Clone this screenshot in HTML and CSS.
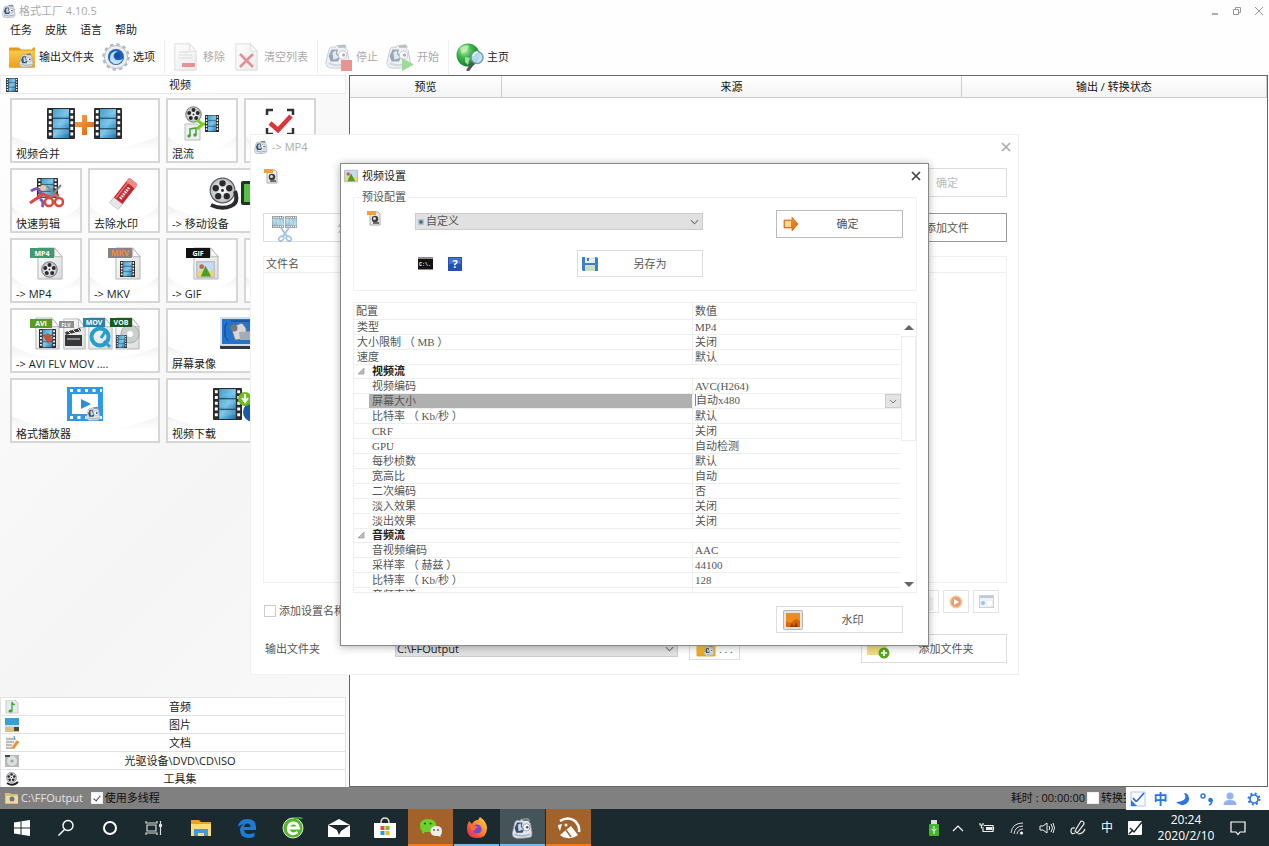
FILE: index.html
```html
<!DOCTYPE html>
<html lang="zh-CN">
<head>
<meta charset="utf-8">
<title>格式工厂 4.10.5</title>
<link rel="stylesheet" href="styles.css">
</head>
<body>
<svg class="defs" aria-hidden="true">
  <defs>
    <linearGradient id="gBlue" x1="0" y1="0" x2="1" y2="1"><stop offset="0" stop-color="#2f8fc0"/><stop offset=".5" stop-color="#6fc0e8"/><stop offset="1" stop-color="#1d79ad"/></linearGradient>
    <linearGradient id="gGold" x1="0" y1="0" x2="0" y2="1"><stop offset="0" stop-color="#fbc94a"/><stop offset="1" stop-color="#e9a21a"/></linearGradient>
    <linearGradient id="gOrange" x1="0" y1="0" x2="1" y2="1"><stop offset="0" stop-color="#f9a552"/><stop offset="1" stop-color="#dd6108"/></linearGradient>
    <linearGradient id="gPage" x1="0" y1="0" x2="1" y2="1"><stop offset="0" stop-color="#fdfdfd"/><stop offset="1" stop-color="#dcdcdc"/></linearGradient>
    <linearGradient id="gFox" x1="1" y1="0" x2="0" y2="1"><stop offset="0" stop-color="#ffe24a"/><stop offset=".5" stop-color="#ff7a2a"/><stop offset="1" stop-color="#e31b5d"/></linearGradient>
    <radialGradient id="gGreen" cx=".35" cy=".3" r=".8"><stop offset="0" stop-color="#b8eeb0"/><stop offset=".4" stop-color="#3cb54a"/><stop offset="1" stop-color="#07702a"/></radialGradient>
    <radialGradient id="gMetal"><stop offset="0" stop-color="#fff"/><stop offset="1" stop-color="#b9bcc0"/></radialGradient>
  </defs>
  <symbol id="film" viewBox="0 0 28 30" preserveAspectRatio="none">
    <rect width="28" height="30" rx="1" fill="#2b2b2d"/>
    <rect x="6" y="1" width="16" height="28" fill="url(#gBlue)"/>
    <path d="M6 10h16M6 20h16" stroke="#1d3a4a" stroke-width="1"/>
    <path d="M6 1h16v5L6 9zM6 11h16v4L6 18zM6 21h16v4L6 27z" fill="#fff" opacity=".12"/>
    <path d="M3.200 2v27M24.800 2v27" stroke="#fff" stroke-width="2.800" stroke-dasharray="3 2.400"/>
  </symbol>
  <symbol id="reel" viewBox="0 0 24 24">
    <circle cx="12" cy="12" r="11" fill="url(#gMetal)" stroke="#56585b"/>
    <g fill="#29292b"><circle cx="12" cy="5.600" r="2.800"/><circle cx="18" cy="10" r="2.800"/><circle cx="15.800" cy="17" r="2.800"/><circle cx="8.200" cy="17" r="2.800"/><circle cx="6" cy="10" r="2.800"/><circle cx="12" cy="12" r="1.300"/></g>
  </symbol>
  <symbol id="ff" viewBox="0 0 28 28">
    <path d="M4 8q0-3 4-4l3 1 1-2 9-1 2 2-1 2 2 2 2 12q1 5-3 6l-9 1H6q-5-1-5-6z" fill="#e2e6ec" stroke="#8f98a6"/>
    <path d="M7 7l7 0-1 4 3 5-2 4-8 0-2-6z" fill="#35516f"/>
    <path d="M8 10l4-2 0 4 3 4-6 2z" fill="#c6d6ea"/>
    <path d="M14 3l8-1v3h-8z" fill="#747d8a"/>
    <circle cx="19" cy="13" r="4.500" fill="#fff" stroke="#8790a0"/><circle cx="20" cy="13" r="1.700" fill="#44566c"/>
    <path d="M4 22q9 4 20 0" stroke="#a7afbb" stroke-width="2" fill="none"/>
  </symbol>
  <symbol id="folder" viewBox="0 0 28 24">
    <path d="M1 3q0-1 1-1h9l2 2h11l1-2h2v20H1z" fill="#e39b1a"/>
    <path d="M1 5h26v16q0 1-1 1H2q-1 0-1-1z" fill="url(#gGold)"/>
    <use href="#ff" x="11" y="7" width="15" height="15"/>
  </symbol>
  <symbol id="page" viewBox="0 0 28 34" preserveAspectRatio="none">
    <path d="M1 1h18l8 9v23H1z" fill="url(#gPage)" stroke="#b4b4b4"/>
    <path d="M19 1v9h8z" fill="#f8f8f8" stroke="#b4b4b4"/>
  </symbol>
  <symbol id="photo" viewBox="0 0 20 18">
    <rect width="20" height="18" rx="1" fill="#b9bfc9"/><rect x="1.500" y="1.500" width="17" height="15" fill="#c5dcf5"/>
    <path d="M1.500 11l5-2 6 2 6-1v6.500h-17z" fill="#efd56c"/><path d="M5 16.500L10 5l6 11.500z" fill="#4d9c2c"/><circle cx="6" cy="6" r="2.500" fill="#d0642a"/>
  </symbol>
  <symbol id="scissors" viewBox="0 0 28 22">
    <path d="M8 1l9 13M20 1l-9 13" stroke="currentColor" stroke-width="2.500" fill="none"/>
    <ellipse cx="8.500" cy="17" rx="4" ry="3" fill="none" stroke="currentColor" stroke-width="2.300" transform="rotate(-40 8.500 17)"/>
    <ellipse cx="19.500" cy="17" rx="4" ry="3" fill="none" stroke="currentColor" stroke-width="2.300" transform="rotate(40 19.500 17)"/>
  </symbol>
  <symbol id="miniprofile" viewBox="0 0 14 16">
    <path d="M3 2h8l2 2v11H3z" fill="#eee" stroke="#aaa"/>
    <path d="M0 1h9v4H0z" fill="#eea03c"/>
    <circle cx="8" cy="9" r="3.300" fill="#3e3e40"/><circle cx="7.500" cy="8.500" r="1.500" fill="#ddd"/><path d="M6 13h6" stroke="#444" stroke-width="1.500"/>
  </symbol>
  <symbol id="chev" viewBox="0 0 10 6"><path d="M1 1l4 4 4-4" fill="none" stroke="#777" stroke-width="1.200"/></symbol>
  <symbol id="close" viewBox="0 0 10 10"><path d="M1 1l8 8M9 1L1 9" fill="none" stroke="currentColor" stroke-width="1.700"/></symbol>
</svg>

<div class="desktop">
  <header class="titlebar">
    <svg class="ico14"><use href="#ff"/></svg>
    <h1>格式工厂 4.10.5</h1>
    <div class="wincontrols">
      <button aria-label="最小化"><svg viewBox="0 0 10 10"><path d="M2 8h6" stroke="#777" stroke-width="1.200"/></svg></button>
      <button aria-label="还原"><svg viewBox="0 0 10 10"><path d="M1.500 3.500h5v5h-5zM3.500 3V1.500h5v5H7" fill="none" stroke="#999"/></svg></button>
      <button aria-label="关闭"><svg viewBox="0 0 10 10"><path d="M1 1l8 8M9 1L1 9" stroke="#999"/></svg></button>
    </div>
  </header>
  <nav class="menubar"><a href="#">任务</a><a href="#">皮肤</a><a href="#">语言</a><a href="#">帮助</a></nav>
  <div class="toolbar">
    <button><svg viewBox="0 0 28 28"><use href="#folder" y="2" width="28" height="25"/></svg>输出文件夹</button>
    <button><svg viewBox="0 0 28 28"><circle cx="14" cy="14" r="12" fill="none" stroke="#b3b8c0" stroke-width="3.500" stroke-dasharray="3.200 3.080"/><circle cx="14" cy="14" r="11.500" fill="#eceef2" stroke="#b9bfc8"/><circle cx="14" cy="14" r="8" fill="#1d63b8"/><path d="M8 17q-1-9 8-9-6 3-4 7t9 1q-3 6-8 5-4-1-5-4z" fill="#bfe0fb"/><circle cx="15.500" cy="12.500" r="3" fill="#1650a0"/></svg>选项</button>
    <span class="sep"></span>
    <button disabled><svg viewBox="0 0 28 28"><use href="#page" x="2" width="23" height="28"/><path d="M7 9h10M7 12h13M7 15h13" stroke="#bbb"/><rect x="10" y="20" width="13" height="4" fill="#cf2b35"/></svg>移除</button>
    <button disabled><svg viewBox="0 0 28 28"><use href="#page" x="2" width="23" height="28"/><path d="M7 11l13 13M20 11L7 24" stroke="#c32531" stroke-width="2.600"/></svg>清空列表</button>
    <span class="sep"></span>
    <button disabled><svg viewBox="0 0 28 28"><use href="#ff" width="26" height="26"/><rect x="16" y="17" width="11" height="11" fill="#d52b2b"/></svg>停止</button>
    <button disabled><svg viewBox="0 0 28 28"><use href="#ff" width="26" height="26"/><path d="M16 15l12 6.500L16 28z" fill="#3db82e"/></svg>开始</button>
    <span class="sep"></span>
    <button><svg viewBox="0 0 28 28"><circle cx="12" cy="12" r="11.500" fill="url(#gGreen)"/><path d="M4 5q5-4 9-2l-2 5-5 3zM9 14l5 1-2 7-3-3z" fill="#c9f2b8" opacity=".75"/><path d="M18 19l-6 8" stroke="#555" stroke-width="3" stroke-linecap="round"/><circle cx="21" cy="14.500" r="6" fill="#bfe0f4" opacity=".92" stroke="#6b98b8" stroke-width="1.500"/><path d="M17 13q1-4 5-4" stroke="#fff" stroke-width="1.500" fill="none"/></svg>主页</button>
  </div>

  <main class="workspace">
    <aside class="sidebar">
      <button class="cat"><svg viewBox="0 0 14 14"><use href="#film" x="1" width="12" height="14"/></svg><span>视频</span></button>
      <div class="tiles">
        <button class="tile w2"><svg width="76" height="36" viewBox="0 0 76 36"><use href="#film" y="2" width="28" height="31"/><use href="#film" x="47" y="2" width="28" height="31"/><path d="M35 9h5v7h7v5h-7v8h-5v-8h-7v-5h7z" fill="url(#gOrange)"/></svg><span>视频合并</span></button>
        <button class="tile"><svg width="36" height="36" viewBox="0 0 36 36"><use href="#reel" x="1" width="17" height="17"/><path d="M1 18h12l3 3v13H1z" fill="#eee" stroke="#bbb"/><path d="M6 30v-7l6-1v7" stroke="#3ca63c" stroke-width="1.500" fill="none"/><circle cx="5" cy="30" r="1.700" fill="#3ca63c"/><circle cx="11" cy="29" r="1.700" fill="#3ca63c"/><path d="M13 14l5 4h5M13 23l6-5" stroke="#76cc22" stroke-width="3" fill="none"/><use href="#film" x="21" y="9" width="14" height="17"/></svg><span>混流</span></button>
        <button class="tile"><svg width="36" height="36" viewBox="0 0 36 36"><path d="M5 9V4h6M25 4h6v5M31 22v6h-6M11 28H5v-6" fill="none" stroke="#333" stroke-width="2.500"/><path d="M8 17l8 7L29 10" fill="none" stroke="#dd343b" stroke-width="4.500"/></svg><span>检查</span></button>

        <button class="tile"><svg width="36" height="36" viewBox="0 0 36 36"><use href="#film" x="9" y="2" width="21" height="20"/><path d="M3 15q7-5 9 1t-3 6M12 23q5 3 2 8" fill="none" stroke="#8055b8" stroke-width="3"/><path d="M2 27l13-9 6 3 10-2" fill="none" stroke="#e04848" stroke-width="3"/><circle cx="15" cy="12" r="3" fill="#f0c9a0"/><path d="M22 22L33 9M30 22L19 10" stroke="#888" stroke-width="2"/><circle cx="21" cy="26" r="4" fill="none" stroke="#d94a38" stroke-width="2.500"/><circle cx="31" cy="26" r="4" fill="none" stroke="#d94a38" stroke-width="2.500"/></svg><span>快速剪辑</span></button>
        <button class="tile"><svg width="36" height="36" viewBox="0 0 36 36"><g transform="rotate(38 18 18)"><rect x="12" y="2" width="11" height="31" rx="1.500" fill="#c6262d"/><path d="M12 7V3q0-1 1-1h9q1 0 1 1v4z" fill="#f08c86"/><rect x="12" y="27" width="11" height="7" fill="#e8e8e8" stroke="#bbb" stroke-width=".5"/><path d="M14 7v19" stroke="#e97878" stroke-width="1.500"/><path d="M18 10v14" stroke="#fff" stroke-width="3" stroke-dasharray="1.500 1"/></g></svg><span>去除水印</span></button>
        <button class="tile w2"><svg width="68" height="36" viewBox="0 0 68 36"><use href="#reel" x="2" width="27" height="29"/><path d="M28 15q4 12-4 15-9 4-20-1" fill="none" stroke="#2b2b2d" stroke-width="4"/><rect x="34" y="5" width="32" height="24" rx="2" fill="#26332a"/><rect x="37" y="8" width="26" height="18" fill="#57c04a"/></svg><span>-&gt; 移动设备</span></button>

        <button class="tile"><svg width="36" height="36" viewBox="0 0 36 36"><use href="#page" x="9" y="1" width="26" height="33"/><rect x="2" y="2" width="24" height="10" fill="#3f9a70"/><text x="14" y="10" class="tag">MP4</text><use href="#reel" x="13" y="15" width="17" height="17"/></svg><span>-&gt; MP4</span></button>
        <button class="tile"><svg width="36" height="36" viewBox="0 0 36 36"><use href="#page" x="9" y="1" width="26" height="33"/><rect x="2" y="2" width="24" height="10" fill="#858585"/><text x="14" y="10" class="tag orange">MKV</text><use href="#film" x="14" y="15" width="15" height="16"/></svg><span>-&gt; MKV</span></button>
        <button class="tile"><svg width="36" height="36" viewBox="0 0 36 36"><use href="#page" x="9" y="1" width="26" height="33"/><rect x="2" y="2" width="24" height="10" fill="#111"/><text x="14" y="10" class="tag">GIF</text><use href="#photo" x="12" y="15" width="19" height="17"/></svg><span>-&gt; GIF</span></button>
        <button class="tile"><svg width="36" height="36" viewBox="0 0 36 36"><use href="#page" x="9" y="1" width="26" height="33"/></svg><span>-&gt; WebM</span></button>

        <button class="tile w2"><svg width="112" height="36" viewBox="0 0 112 36"><use href="#page" x="6" y="1" width="25" height="33"/><rect x="1" y="3" width="22" height="9" fill="#5a9b22"/><text x="12" y="10" class="tag">AVI</text><use href="#film" x="10" y="13" width="17" height="19"/><path d="M14 20l5-3 5 6-5 5z" fill="#c1553a"/>
          <use href="#page" x="34" y="2" width="23" height="32"/><rect x="30" y="5" width="15" height="7" fill="#8f8f8f"/><text x="37" y="11" class="tag small">FLV</text><path d="M36 16l15-4 1 3-15 4zM36 19h17v11H36z" fill="#37383a"/><path d="M39 15l3 3M44 14l3 3M49 13l2 2M38 23h13" stroke="#ddd"/>
          <use href="#page" x="59" y="1" width="25" height="33"/><rect x="54" y="2" width="22" height="9" fill="#2f80a7"/><text x="65" y="9" class="tag">MOV</text><circle cx="71" cy="21" r="8.500" fill="none" stroke="#259ed0" stroke-width="4"/><path d="M72 22l4-6M75 25l6 6" stroke="#259ed0" stroke-width="3"/>
          <use href="#page" x="86" y="1" width="25" height="33"/><circle cx="101" cy="18" r="9" fill="#ccd0cc" stroke="#aaa"/><circle cx="101" cy="18" r="3" fill="#fff"/><rect x="81" y="2" width="22" height="9" fill="#155c20"/><text x="92" y="9" class="tag">VOB</text><use href="#film" x="87" y="19" width="11" height="13"/></svg><span>-&gt; AVI FLV MOV ....</span></button>
        <button class="tile w2"><svg width="44" height="36" viewBox="0 0 44 36"><rect x="1" y="2" width="42" height="31" rx="1" fill="#34383e"/><rect x="1" y="1" width="42" height="29" rx="1" fill="#d4dce6"/><rect x="3" y="3" width="38" height="25" fill="#2273ce"/><path d="M8 7l-2 3v10l3 5M12 5h20l6 5-2 14" fill="none" stroke="#123f86"/><path d="M12 11l11-4 4 5 1 11-12 1z" fill="#d8d8dc" stroke="#777"/><circle cx="15" cy="12" r="3.500" fill="#777"/><path d="M20 16l14-1v9H21z" fill="#a4acb8"/></svg><span>屏幕录像</span></button>

        <button class="tile w2"><svg width="36" height="36" viewBox="0 0 36 36"><rect width="36" height="34" y="1" fill="#2b9ae8"/><rect x="5" y="8" width="26" height="20" fill="#fff"/><path d="M3 4.500h32M3 31.500h32" stroke="#fff" stroke-width="3" stroke-dasharray="3 4.500"/><path d="M14 13l10 5-10 5z" fill="#2b8fd8"/><use href="#ff" x="18" y="20" width="17" height="15"/></svg><span>格式播放器</span></button>
        <button class="tile w2"><svg width="56" height="36" viewBox="0 0 56 36"><use href="#film" y="2" width="29" height="32"/><circle cx="40" cy="26" r="10" fill="#1c59a4"/><circle cx="32" cy="13" r="7" fill="#6cbc1e"/><path d="M32 8v6m-3-2l3 4 3-4" stroke="#fff" stroke-width="2" fill="none"/></svg><span>视频下载</span></button>
      </div>
      <div class="cats">
        <button class="cat"><svg viewBox="0 0 14 14"><path d="M1 0h9l3 3v10H1z" fill="#e7ebe7" stroke="#ccc"/><path d="M7 11V2q0 2 3 3" fill="none" stroke="#36a436" stroke-width="1.300"/><ellipse cx="5.500" cy="11" rx="2" ry="1.500" fill="#36a436"/></svg><span>音频</span></button>
        <button class="cat"><svg viewBox="0 0 14 14"><rect width="14" height="14" fill="#3a9fd6"/><path d="M0 7h14v3H0z" fill="#bfe2ec"/><path d="M0 9h14v5H0z" fill="#dcc083"/><path d="M9 9h5v4H9z" fill="#4d4a3c"/></svg><span>图片</span></button>
        <button class="cat"><svg viewBox="0 0 14 14"><path d="M1 1h10v12H1z" fill="#eee"/><path d="M1 3h8M1 6h8M1 9h6M1 12h8" stroke="#888"/><path d="M13 5l-5 7" stroke="#ee9030" stroke-width="3"/><path d="M9 0l1 4" stroke="#3992c4"/></svg><span>文档</span></button>
        <button class="cat"><svg viewBox="0 0 14 14"><path d="M0 1h14v12H0z" fill="#b9b9b9"/><circle cx="7" cy="7" r="5" fill="#dedede"/><circle cx="7" cy="7" r="1.500" fill="#79b5a4"/><path d="M0 1h5v2H0z" fill="#444"/></svg><span>光驱设备\DVD\CD\ISO</span></button>
        <button class="cat"><svg viewBox="0 0 14 14"><use href="#reel" x="1" width="11" height="11"/><path d="M2 11q6 4 11-1" stroke="#222" stroke-width="2" fill="none"/></svg><span>工具集</span></button>
      </div>
    </aside>
    <section class="tasks">
      <table><thead><tr><th class="c1">预览</th><th class="c2">来源</th><th class="c3">输出 / 转换状态</th></tr></thead></table>
    </section>
  </main>

  <footer class="status">
    <svg class="ico14" viewBox="0 0 14 14"><path d="M0 2h5l1 1h7v10H0z" fill="#d8bd74"/><path d="M1 5h12v7H1z" fill="#eddba0"/><circle cx="7" cy="8" r="2.500" fill="#6d7787"/></svg>
    <a href="#">C:\FFOutput</a>
    <label><input type="checkbox" checked>使用多线程</label>
    <div class="right"><span>耗时 : 00:00:00</span><label><input type="checkbox">转换完成后</label></div>
  </footer>

  <footer class="taskbar">
    <div class="sys">
      <button aria-label="开始"><svg width="16" height="16" viewBox="0 0 16 16"><path d="M0 2.500L6.500 1.500V7.500H0zM7.500 1.300L16 0v7.500H7.500zM0 8.500h6.500v6L0 13.500zM7.500 8.500H16V16l-8.500-1.300z" fill="#fff"/></svg></button>
      <button aria-label="搜索"><svg width="18" height="18" viewBox="0 0 18 18"><circle cx="11" cy="6.500" r="5" fill="none" stroke="#fff" stroke-width="1.400"/><path d="M7.500 10.500L1.500 16.500" stroke="#fff" stroke-width="1.500"/></svg></button>
      <button aria-label="Cortana"><svg width="16" height="16" viewBox="0 0 16 16"><circle cx="8" cy="8" r="6" fill="none" stroke="#fff" stroke-width="2"/></svg></button>
      <button aria-label="任务视图"><svg width="18" height="16" viewBox="0 0 18 16"><path d="M2 5h9v6H2zM1 1v2h11V1M1 15v-2h11v2M15.500 1v14" fill="none" stroke="#ddd" stroke-width="1.200"/><path d="M14 4h3v3h-3z" fill="#ddd"/></svg></button>
    </div>
    <div class="apps">
      <button aria-label="文件资源管理器"><svg width="22" height="20" viewBox="0 0 22 20"><path d="M1 2h8l2 2h10v14H1z" fill="#e9a320"/><path d="M1 6h20v12H1z" fill="#ffdc76"/><path d="M4 18v-7h14v7h-4v-3H8v3z" fill="#3f9bdc"/></svg></button>
      <button aria-label="Edge"><svg width="20" height="20" viewBox="0 0 20 20"><path d="M1 9Q2 1 10.500 1 19 1 19 9v3H7q.5 4 5 4 3 0 5.500-1.500v4Q15 20 11 20 3 19.500 3 12q0-4 4-6-4 .5-6 3zM7 9h6.500q0-3.500-3-3.500T7 9z" fill="#1b7cd8"/></svg></button>
      <button aria-label="浏览器"><svg width="22" height="22" viewBox="0 0 22 22"><circle cx="11" cy="11" r="10" fill="#55b72c" stroke="#dfeccf"/><path d="M15.500 15q-4 3-7 1t-2-6 5-4 5 5H7" fill="none" stroke="#fff" stroke-width="2.800"/><path d="M12 1q7-1 8 1" stroke="#3da020" stroke-width="2" fill="none"/></svg></button>
      <button aria-label="邮件"><svg width="24" height="20" viewBox="0 0 24 20"><path d="M1 7l11-6 11 6v12H1z" fill="#fff"/><path d="M1 7h22l-9 6-2 4-2-5z" fill="#1b2a2f"/></svg></button>
      <button aria-label="应用商店"><svg width="22" height="22" viewBox="0 0 22 22"><path d="M7 6q0-5 4-5t4 5" fill="none" stroke="#ddd" stroke-width="1.500"/><path d="M0 6h22v14q0 1-1 1H1q-1 0-1-1z" fill="#fff"/><path d="M6.500 9h4v4h-4z" fill="#ea4f28"/><path d="M11.500 9h4v4h-4z" fill="#7fb92c"/><path d="M6.500 14h4v4h-4z" fill="#1ba1e2"/><path d="M11.500 14h4v4h-4z" fill="#f8b41c"/></svg></button>
      <button class="alert" aria-label="微信"><svg width="24" height="20" viewBox="0 0 24 20"><path d="M9 1q8 0 8 6.500T9 14l-3 0-3 2v-3Q1 11 1 7.500 1 1 9 1z" fill="#6cd02c"/><circle cx="6" cy="5.500" r="1" fill="#274a12"/><circle cx="11.500" cy="5.500" r="1" fill="#274a12"/><path d="M17 8q6 0 6 5 0 3-1.500 4v2l-2-1h-3q-5-.5-5-5t5.500-5z" fill="#eee"/><circle cx="15" cy="12" r=".9" fill="#555"/><circle cx="19" cy="12" r=".9" fill="#555"/></svg></button>
      <button class="run" aria-label="Firefox"><svg width="22" height="22" viewBox="0 0 22 22"><path d="M3 4l3 3q2-4 6-4l2-3q7 5 7 11 0 10-10 10T1 12q0-5 2-8z" fill="url(#gFox)"/><circle cx="11" cy="12" r="4.500" fill="#7448d4"/><path d="M4 9q5-2 8 2-3 0-4 3-3-1-4-5z" fill="#ff6a32"/></svg></button>
      <button class="run active" aria-label="格式工厂"><svg width="23" height="22"><use href="#ff"/></svg></button>
      <button class="alert" aria-label="图库"><svg width="24" height="22" viewBox="0 0 24 22"><path d="M3 4q8-5 15 0 5 5 4 11" fill="none" stroke="#fff" stroke-width="2.500"/><path d="M1 8l4-1-2 7q-2-3-2-6zM3 18L14 9l7 9q-5 4-10 3-5 0-8-3z" fill="#fff"/><path d="M9 13l5 7" stroke="#a4622b" stroke-width="1.500"/><circle cx="9" cy="8" r="1.500" fill="#fff"/></svg></button>
    </div>
    <div class="tray">
      <svg class="t1" width="12" height="16" viewBox="0 0 12 16"><path d="M3 0h6v4H3z" fill="#ddd"/><rect x="1" y="4" width="10" height="12" rx="1" fill="#43b52a"/><path d="M6 6v8M3.500 9l2.500 2 2.500-2" stroke="#fff" fill="none"/></svg>
      <svg width="12" height="8" viewBox="0 0 12 8"><path d="M1 7l5-5 5 5" fill="none" stroke="#fff" stroke-width="1.200"/></svg>
      <svg width="16" height="12" viewBox="0 0 16 12"><path d="M5 3.500h9v6H4V7M14.500 5v3M1 1v2h3V1M2.500 3v3H5" fill="none" stroke="#eee" stroke-width="1.200"/><path d="M7 5h6v3H7z" fill="#eee"/></svg>
      <svg width="14" height="14" viewBox="0 0 14 14"><path d="M1 12Q2 2 13 2M4 13Q5 5 13 5M7 13q1-5 6-5" fill="none" stroke="#ddd"/><circle cx="11.500" cy="12" r="1.500" fill="#fff"/></svg>
      <svg width="16" height="14" viewBox="0 0 16 14"><path d="M1 5h3l4-3v10L4 9H1zM10 5q1.500 2 0 4M12 3q3 4 0 8M14 2q3 5 0 10" fill="none" stroke="#eee"/></svg>
      <svg width="16" height="16" viewBox="0 0 16 16"><path d="M5 11L11 1q3 0 3 3l-7 9zM5 8q-4-1-4 3t4 2M8 14q5 0 7-5" fill="none" stroke="#eee" stroke-width="1.200"/></svg>
      <span class="lang">中</span>
      <svg width="14" height="14" viewBox="0 0 14 14"><rect width="14" height="14" rx="1" fill="#fff"/><path d="M2 7l4 4 8-10M1 13l4-4" stroke="#1b2a2f" stroke-width="1.500" fill="none"/></svg>
      <time><span>20:24</span><span>2020/2/10</span></time>
      <button aria-label="通知"><svg width="16" height="16" viewBox="0 0 16 16"><path d="M1 2h14v10h-5l-2 2.500L6 12H1z" fill="none" stroke="#fff" stroke-width="1.200"/></svg></button>
    </div>
  </footer>

  <div class="ime">
    <svg viewBox="0 0 16 16"><path d="M1 1h14v14H1z" fill="#fff" stroke="#aac8f4"/><path d="M3 7q3 4 4 3L14 2" fill="none" stroke="#246be0" stroke-width="1.700"/><path d="M1 9l6 6H1z" fill="#2d75e6"/></svg>
    <span>中</span>
    <svg viewBox="0 0 16 16"><path d="M9 2q5 8-8 9 5 5 10 2t2-9q-1-2-4-2z" fill="#2d75e6"/></svg>
    <svg viewBox="0 0 16 16"><circle cx="4" cy="5" r="2" fill="none" stroke="#2d75e6" stroke-width="1.500"/><circle cx="11.500" cy="9" r="2.300" fill="#2d75e6"/><path d="M13 9q0 4-3 5" fill="none" stroke="#2d75e6" stroke-width="1.500"/></svg>
    <svg viewBox="0 0 16 16"><circle cx="8" cy="5" r="3.500" fill="#8fb3f0"/><path d="M1.500 14q0-5 6.500-5t6.500 5z" fill="#8fb3f0"/></svg>
    <svg viewBox="0 0 16 16"><circle cx="8" cy="8" r="4" fill="none" stroke="#2d75e6" stroke-width="1.700"/><circle cx="8" cy="8" r="5.500" fill="none" stroke="#2d75e6" stroke-width="2" stroke-dasharray="2 2.320"/></svg>
  </div>

  <section class="window mp4">
    <header><svg class="ico14"><use href="#ff"/></svg><h2>-&gt; MP4</h2><button class="x" aria-label="关闭"><svg><use href="#close"/></svg></button></header>
    <div class="r1"><svg width="14" height="16"><use href="#miniprofile"/></svg><button class="btn" disabled>确定</button></div>
    <div class="r2"><button class="btn cut" disabled><svg width="30" height="28" viewBox="0 0 30 28" color="#3f86cf"><use href="#film" transform="rotate(90 8 8)" x="2" y="2" width="12" height="12"/><use href="#film" transform="rotate(90 21 8)" x="15" y="2" width="12" height="12"/><use href="#scissors" x="4" y="13" width="22" height="15"/></svg><span>分割</span></button><button class="btn dark">添加文件</button></div>
    <div class="list"><table><thead><tr><th>文件名</th></tr></thead></table></div>
    <div class="r3"><label><input type="checkbox">添加设置名称</label>
      <div><button class="btn sq" aria-label="新建"><svg width="14" height="16" opacity=".4"><use href="#page"/></svg></button><button class="btn sq" aria-label="播放"><svg width="14" height="14" viewBox="0 0 14 14" opacity=".7"><circle cx="7" cy="7" r="6.500" fill="#f0b088"/><circle cx="7" cy="7" r="5" fill="#e2762b"/><path d="M5 4l5 3-5 3z" fill="#fff"/></svg></button><button class="btn sq" aria-label="信息"><svg width="15" height="13" viewBox="0 0 15 13" opacity=".6"><rect x=".5" y=".5" width="14" height="12" fill="#e5eaf0" stroke="#aab4c0"/><path d="M1 2h13" stroke="#8fa6c0" stroke-width="2"/><circle cx="4" cy="8" r="2" fill="#4aa3d0"/><path d="M8 6h5v4H8z" fill="#fff"/></svg></button></div></div>
    <div class="r4"><label for="outdir">输出文件夹</label>
      <div class="combo"><select id="outdir"><option>C:\FFOutput</option></select><svg><use href="#chev"/></svg></div>
      <button class="btn browse"><svg width="20" height="18"><use href="#folder"/></svg>. . .</button>
      <button class="btn add"><svg width="24" height="20" viewBox="0 0 24 20"><path d="M1 2h8l2 2h9v12H1z" fill="#d9b247"/><path d="M1 6h20v10H1z" fill="#f2da81"/><circle cx="18" cy="14" r="5.500" fill="#55a822"/><path d="M15 14h6M18 11v6" stroke="#fff" stroke-width="1.700"/></svg><span>添加文件夹</span></button></div>
  </section>

  <section class="window settings" role="dialog" aria-label="视频设置">
    <header><svg class="ico14"><use href="#photo"/></svg><h2>视频设置</h2><button class="x" aria-label="关闭"><svg><use href="#close"/></svg></button></header>
    <fieldset>
      <legend>预设配置</legend>
      <div class="preset">
        <svg width="14" height="16"><use href="#miniprofile"/></svg>
        <div class="combo"><svg class="dot" viewBox="0 0 8 8"><rect width="8" height="8" fill="#b3c3d0"/><rect x="2" y="2" width="4" height="4" fill="#39658b"/></svg><select aria-label="预设"><option>自定义</option></select><svg><use href="#chev"/></svg></div>
        <button class="btn ok"><svg width="16" height="14" viewBox="0 0 16 14"><path d="M1 3h8V0l6 7-6 7v-3H1z" fill="url(#gOrange)" stroke="#cf6410" stroke-width=".7"/><path d="M2 4h6v6H2z" fill="#ffd795"/></svg><span>确定</span></button>
        <div class="tools">
          <button aria-label="命令行"><svg width="15" height="13" viewBox="0 0 15 13"><rect width="15" height="13" fill="#8d8d8d"/><rect y="2" width="15" height="10" fill="#111"/><text x="7" y="9" class="cmd">C:\.</text></svg></button>
          <button aria-label="帮助"><svg width="14" height="14" viewBox="0 0 14 14"><rect width="14" height="14" fill="#2451b8"/><rect x="1" y="1" width="12" height="6" fill="#4270cc"/><text x="7" y="11" class="q">?</text></svg></button>
          <button class="btn saveas"><svg width="16" height="16" viewBox="0 0 16 16"><path d="M0 1h14l2 1v13H1l-1-1z" fill="#3f7dc6"/><rect x="3" y="1" width="10" height="6" fill="#e3eef9"/><rect x="3" y="9" width="10" height="6" fill="#c8e0bd"/><path d="M5 2h2v3H5z" fill="#4677ab"/></svg><span>另存为</span></button>
        </div>
      </div>
    </fieldset>
    <div class="grid">
      <table>
        <thead><tr><th class="k">配置</th><th>数值</th><th class="sb"></th></tr></thead>
        <tbody>
          <tr><td>类型</td><td>MP4</td></tr>
          <tr><td>大小限制 （ MB ）</td><td>关闭</td></tr>
          <tr><td>速度</td><td>默认</td></tr>
          <tr class="group"><td colspan="2"><svg viewBox="0 0 8 8"><path d="M7 1v6H1z" fill="#bbb" stroke="#999" stroke-width=".7"/></svg>视频流</td></tr>
          <tr class="sub"><td>视频编码</td><td>AVC(H264)</td></tr>
          <tr class="sub sel"><td><span>屏幕大小</span></td><td><div class="edit"><input value="自动x480" aria-label="屏幕大小"><button aria-label="展开"><svg><use href="#chev"/></svg></button></div></td></tr>
          <tr class="sub"><td>比特率 （ Kb/秒 ）</td><td>默认</td></tr>
          <tr class="sub"><td>CRF</td><td>关闭</td></tr>
          <tr class="sub"><td>GPU</td><td>自动检测</td></tr>
          <tr class="sub"><td>每秒桢数</td><td>默认</td></tr>
          <tr class="sub"><td>宽高比</td><td>自动</td></tr>
          <tr class="sub"><td>二次编码</td><td>否</td></tr>
          <tr class="sub"><td>淡入效果</td><td>关闭</td></tr>
          <tr class="sub"><td>淡出效果</td><td>关闭</td></tr>
          <tr class="group"><td colspan="2"><svg viewBox="0 0 8 8"><path d="M7 1v6H1z" fill="#bbb" stroke="#999" stroke-width=".7"/></svg>音频流</td></tr>
          <tr class="sub"><td>音视频编码</td><td>AAC</td></tr>
          <tr class="sub"><td>采样率 （ 赫兹 ）</td><td>44100</td></tr>
          <tr class="sub"><td>比特率 （ Kb/秒 ）</td><td>128</td></tr>
          <tr class="sub"><td>音频声道</td><td>2</td></tr>
        </tbody>
      </table>
      <div class="scroll"><i class="up"></i><i class="thumb"></i><i class="down"></i></div>
    </div>
    <div class="foot"><button class="btn"><svg width="20" height="20" viewBox="0 0 20 20"><rect x=".5" y=".5" width="19" height="19" rx="1" fill="#e4e4e4" stroke="#b5b5b5"/><rect x="3" y="3" width="14" height="14" fill="#d96508"/><path d="M3 3h14v8q-4-4-7 0t-7 0z" fill="#ee8c22"/><path d="M7 17l2-4 2 4 2-5 2 5z" fill="#8d3a05"/></svg><span>水印</span></button></div>
  </section>
</div>
</body>
</html>
```
FILE: styles.css
```css
* { box-sizing: border-box; }
body {
  margin: 0;
  font: 11px/16px "Open Sans", "Noto Sans CJK SC", sans-serif;
  color: #222;
  background: #fefefe;
}
button, input, select { font: inherit; color: inherit; margin: 0; }
button { background: none; border: 0; padding: 0; }
svg { display: block; flex: none; }
a { color: inherit; text-decoration: none; }
h1, h2 { margin: 0; font-size: 11px; font-weight: 400; }
table { border-spacing: 0; width: 100%; table-layout: fixed; }
th { font-weight: 400; }
.defs { position: absolute; width: 0; height: 0; }
.ico14 { width: 14px; height: 14px; }

.desktop {
  position: relative;
  display: flex;
  flex-direction: column;
  height: 100vh;
  overflow: hidden;
}

/* main window chrome */
.titlebar { display: flex; align-items: center; gap: 3px; height: 21px; padding: 0 3px 0 2px; flex: none; }
.titlebar h1 { color: #aaa; }
.wincontrols { margin-left: auto; display: flex; gap: 12px; padding-right: 2px; }
.wincontrols svg { width: 10px; height: 10px; }
.menubar { display: flex; gap: 13px; padding-left: 10px; height: 17px; align-items: center; flex: none; }
.toolbar { display: flex; gap: 8px; padding-left: 8px; height: 37px; align-items: center; flex: none; }
.toolbar button { display: flex; align-items: center; gap: 3px; white-space: nowrap; }
.toolbar button svg { width: 28px; height: 28px; }
.toolbar button:disabled { color: #aaa; }
.toolbar button:disabled svg { opacity: .5; }
.toolbar .sep { width: 1px; height: 34px; background: #eee; margin: 0 -1px 0 1px; }

.workspace { flex: 1; min-height: 0; display: flex; }
.sidebar {
  width: 349px;
  flex: none;
  display: flex;
  flex-direction: column;
  padding-right: 3px;
  background: linear-gradient(135deg, #fefefe, #f5f5f5 60%, #fafafa);
}
.cat {
  display: flex;
  align-items: center;
  width: 100%;
  height: 19px;
  padding: 0 4px;
  background: #fff;
  border: 1px solid #ebebeb;
  flex: none;
}
.cat svg { width: 14px; height: 14px; }
.cat span { flex: 1; }
.tiles {
  display: grid;
  grid-template-columns: repeat(4, 72px);
  grid-auto-rows: 65px;
  gap: 5px 6px;
  padding: 4px 0 0 10px;
}
.tile {
  display: flex;
  flex-direction: column;
  align-items: center;
  gap: 4px;
  padding: 6px 4px 0;
  border: 2px solid #d6d6d6;
  background: radial-gradient(ellipse 60% 30px at 50% 20px, #fff 98%, transparent), linear-gradient(#fff 24px, #eee 34px, #fff 50px);
}
.tile.w2 { grid-column: span 2; }
.tile span { align-self: flex-start; white-space: nowrap; }
.tag { font: bold 7px "Open Sans", sans-serif; fill: #fff; text-anchor: middle; }
.tag.small { font-size: 5px; }
.tag.orange { font-size: 8px; fill: #ff8430; }
.cats { margin-top: auto; }
.cats .cat { height: 18px; border-bottom: 0; border-color: #e2e2e2; }

.tasks { flex: 1; background: #fff; border: 1px solid #666; margin-right: 1px; }
.tasks th { height: 22px; padding: 0; border: solid #ccc; border-width: 0 1px 1px 0; background: linear-gradient(#fff, #f3f3f3); color: #111; }
.tasks .c1 { width: 16.6%; }
.tasks .c2 { width: 50.1%; }

.status { display: flex; align-items: center; height: 22px; flex: none; padding-left: 5px; background: #808080; color: #111; white-space: nowrap; overflow: hidden; }
.status a { color: #e4e4e4; margin: 0 8px 0 2px; }
.status label { display: flex; align-items: center; gap: 2px; }
.status .right { margin-left: auto; display: flex; gap: 2px; padding-right: 113px; }
input[type=checkbox] { appearance: none; width: 12px; height: 12px; background: #fff; border: 1px solid #eee; flex: none; }
input[type=checkbox]:checked::after { content: ""; display: block; width: 3px; height: 6px; margin: 1px 3px; border: solid #444; border-width: 0 1px 1px 0; transform: rotate(40deg); }

/* system taskbar */
.taskbar { display: flex; height: 37px; flex: none; background: #1b2a2f; color: #fff; }
.taskbar button { display: flex; align-items: center; justify-content: center; }
.sys { display: flex; margin-right: 2px; }
.sys button { width: 44px; }
.apps { display: flex; gap: 1px; }
.apps button { width: 45px; border-bottom: 2px solid transparent; padding-top: 2px; }
.apps .alert { background: #a4622b; border-color: #f47a16; }
.apps .run { border-color: #76b9ed; }
.apps .active { background: #455459; }
.tray { display: flex; align-items: center; gap: 15px; margin-left: auto; padding-right: 23px; }
.tray .t1 { margin-right: -3px; }
.tray .lang { font-size: 12px; }
.tray time { display: flex; flex-direction: column; align-items: center; width: 58px; font-size: 12px; line-height: 16px; }
.ime {
  position: absolute;
  right: 0;
  bottom: 36px;
  width: 143px;
  height: 23px;
  display: flex;
  align-items: center;
  justify-content: space-between;
  padding: 0 7px 0 4px;
  background: #fff;
  color: #2d75e6;
  font-weight: 700;
  font-size: 14px;
}
.ime svg { width: 16px; height: 16px; }

/* floating windows */
.window { position: absolute; display: flex; flex-direction: column; background: #fff; font-family: "Liberation Serif", "Noto Sans CJK SC", serif; color: #555; }
.window header { display: flex; align-items: center; gap: 4px; height: 24px; padding: 0 7px 0 3px; font-family: "Open Sans", "Noto Sans CJK SC", sans-serif; flex: none; }
.window .x { margin-left: auto; color: #444; }
.window .x svg { width: 10px; height: 10px; }
.btn { display: flex; align-items: center; background: #fff; border: 1px solid #ddd; padding: 0 6px; white-space: nowrap; }
.btn span { flex: 1; text-align: center; }
.btn:disabled { color: #bbb; }
.btn:disabled svg { opacity: .5; }
.combo { display: flex; align-items: center; height: 17px; background: #e1e1e1; border: 1px solid #ccc; padding: 0 3px 0 1px; }
.combo select { appearance: none; flex: 1; min-width: 0; border: 0; padding: 0; background: none; height: 15px; line-height: 15px; }
.combo svg { width: 9px; height: 6px; }
.combo .dot { width: 6px; height: 8px; margin: 0 2px 0 1px; }

.mp4 { left: 250px; top: 134px; width: 769px; height: 541px; border: 1px solid #f0f0f0; padding: 0 11px 11px 12px; }
.mp4 header { margin: 0 -11px 0 -12px; }
.mp4 h2, .mp4 .x { color: #aaa; }
.r1, .r2, .r4 { display: flex; justify-content: space-between; height: 29px; flex: none; }
.r1 { margin-top: 9px; padding-left: 1px; }
.r1 .btn, .r2 .dark, .r4 .add { width: 146px; height: 29px; justify-content: center; }
.r1 .btn, .r2 .dark { padding-left: 32px; }
.r2 { margin-top: 16px; }
.r2 .cut { width: 146px; padding-right: 12px; }
.r2 .dark { border-color: #999; }
.list { flex: 1; margin-top: 14px; border: 1px solid #f0f0f0; }
.list th { text-align: left; padding: 0 2px; height: 15px; line-height: 15px; border-bottom: 1px solid #eee; }
.r3 { display: flex; justify-content: space-between; height: 29px; margin-top: 7px; padding-right: 8px; flex: none; }
.r3 label { align-self: flex-end; display: flex; align-items: center; gap: 3px; padding-left: 1px; }
.r3 input { border-color: #ccc; }
.r3 div { display: flex; gap: 4px; }
.btn.sq { width: 26px; height: 23px; padding: 0; justify-content: center; border-color: #e4e4e4; }
.r4 { margin-top: 15px; align-items: center; }
.r4 label { width: 132px; padding-left: 2px; }
.r4 .combo { width: 283px; font-family: "Open Sans", sans-serif; color: #222; }
.r4 .browse { width: 51px; height: 22px; gap: 3px; margin-left: 11px; }
.r4 .add { margin-left: auto; padding: 0 4px; }

.settings { left: 340px; top: 163px; width: 589px; height: 483px; border: 1px solid #888; box-shadow: 0 1px 8px rgba(0, 0, 0, .3); padding: 0 11px 12px 12px; }
.settings header { margin: 0 -11px 0 -12px; color: #222; }
fieldset { margin: 2px 0 0; padding: 0; border: 1px solid #f0f0f0; min-width: 0; }
legend { margin-left: 6px; padding: 0 2px; line-height: 14px; }
.preset { display: grid; grid-template-columns: 48px 288px 1fr 127px; grid-template-rows: 28px 27px; row-gap: 12px; padding: 6px 13px 13px; align-items: start; }
.preset .combo { margin-top: 3px; }
.preset .ok { grid-column: 4; height: 28px; border-color: #bbb; }
.tools { grid-column: 2; display: flex; align-items: center; gap: 15px; padding-left: 3px; }
.tools .saveas { width: 126px; height: 27px; margin-left: auto; padding: 0 0 0 4px; }
.cmd { font: bold 5px "Liberation Mono", monospace; fill: #fff; text-anchor: middle; }
.q { font: bold 11px "Open Sans", sans-serif; fill: #fff; text-anchor: middle; }

.grid { position: relative; flex: 1; min-height: 0; margin: 11px 0 13px; border: 1px solid #eee; overflow: hidden; }
.grid th, .grid td { height: 15px; padding: 0 3px; line-height: 14px; text-align: left; border-bottom: 1px solid #eee; white-space: nowrap; overflow: hidden; }
.grid th { height: 17px; padding: 0 2px; line-height: 16px; }
.grid .k { width: 338px; }
.grid .sb { width: 15px; }
.grid th + th, .grid td + td { border-left: 1px solid #eee; padding-left: 2px; }
.grid th.sb { border-left: 0; }
.grid .sub td:first-child { padding-left: 18px; }
.grid .group td { height: 14px; line-height: 13px; font-weight: 700; color: #222; }
.grid .group svg { display: inline-block; width: 8px; height: 8px; margin-right: 7px; }
.grid .sel td:first-child { padding: 0 0 0 15px; }
.grid .sel td span { display: block; padding-left: 3px; background: #b0b0b0; }
.grid .sel td + td { padding-right: 0; }
.edit { display: flex; height: 14px; }
.edit input { flex: 1; min-width: 0; border: 0; border-left: 1px solid #888; padding: 0; height: 12px; }
.edit button { width: 16px; background: #e4e4e4; border: 1px solid #ccc; display: flex; align-items: center; justify-content: center; }
.edit svg { width: 8px; height: 5px; }
.scroll { position: absolute; right: 0; top: 17px; bottom: 0; width: 15px; display: flex; flex-direction: column; align-items: center; padding: 5px 0; }
.scroll i { border: 5px solid transparent; }
.scroll .up { border-top: 0; border-bottom-color: #666; }
.scroll .thumb { width: 15px; height: 105px; margin: 6px 0 auto; border: 1px solid #eee; }
.scroll .down { border-bottom: 0; border-top-color: #666; }
.foot { display: flex; justify-content: flex-end; padding-right: 14px; flex: none; }
.foot .btn { width: 127px; height: 27px; padding-right: 0; }
```
